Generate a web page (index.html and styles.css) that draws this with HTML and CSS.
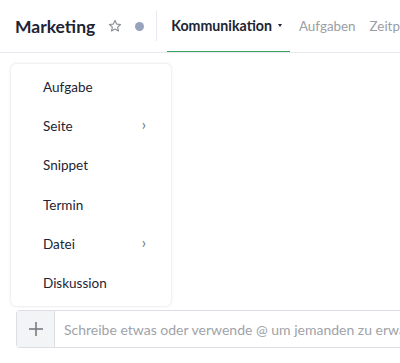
FILE: index.html
```html
<!DOCTYPE html>
<html lang="de">

<head>
  <meta charset="UTF-8">
  <meta name="viewport" content="width=device-width, initial-scale=1.0">
  <title>Marketing</title>
  <link rel="stylesheet" href="styles.css">
</head>

<body>
  <div class="page">
    <header class="topbar">
      <h1 class="title">Marketing</h1>
      <svg class="star" width="14" height="14" viewBox="0 0 24 24" fill="none" stroke="currentColor" stroke-width="2"
        stroke-linejoin="round">
        <polygon points="12,2.5 14.9,8.7 21.5,9.4 16.5,13.9 17.9,20.5 12,17.1 6.1,20.5 7.5,13.9 2.5,9.4 9.1,8.7" />
      </svg>
      <span class="status-dot"></span>
      <span class="divider"></span>
      <nav class="tabs">
        <a class="tab active">Kommunikation <span class="caret"></span></a>
        <a class="tab">Aufgaben</a>
        <a class="tab">Zeitplan</a>
      </nav>
    </header>

    <main class="content">
      <ul class="menu">
        <li class="menu-item">Aufgabe</li>
        <li class="menu-item">Seite <span class="chev">&#8250;</span></li>
        <li class="menu-item">Snippet</li>
        <li class="menu-item">Termin</li>
        <li class="menu-item">Datei <span class="chev">&#8250;</span></li>
        <li class="menu-item">Diskussion</li>
      </ul>
    </main>

    <div class="composer">
      <button class="add-btn">
        <svg width="14" height="14" viewBox="0 0 14 14" stroke="currentColor" stroke-width="1.6">
          <line x1="7" y1="0" x2="7" y2="14" />
          <line x1="0" y1="7" x2="14" y2="7" />
        </svg>
      </button>
      <input class="message" type="text" placeholder="Schreibe etwas oder verwende @ um jemanden zu erwähnen">
    </div>
  </div>
</body>

</html>
```

FILE: styles.css
```css
body {
  margin: 0;
  font-family: 'Lato', 'Noto Sans', sans-serif;
  color: #1d2433;
  background: #fff;
  overflow: hidden;
}

.page {
  height: 100vh;
  display: flex;
  flex-direction: column;
  position: relative;
}

.topbar {
  height: 52px;
  flex-shrink: 0;
  display: flex;
  align-items: center;
  padding-left: 15px;
  border-bottom: 1px solid #e8e9ee;
  white-space: nowrap;
  overflow: hidden;
}

.topbar > * {
  flex-shrink: 0;
}

.title {
  margin: 0;
  font-size: 17.5px;
  font-weight: 700;
  color: #1d2433;
}

.star {
  color: #8b8f97;
  margin-left: 13px;
}

.status-dot {
  width: 9px;
  height: 9px;
  border-radius: 50%;
  background: #97a3bd;
  margin-left: 13px;
}

.divider {
  width: 1px;
  height: 30px;
  background: #e8e9ee;
  margin-left: 12px;
}

.tabs {
  display: flex;
  align-self: stretch;
  margin-left: 10px;
}

.tab {
  display: flex;
  align-items: center;
  padding: 0 5px;
  margin-right: 4px;
  font-size: 13.4px;
  color: #9a9ea6;
  border-bottom: 2px solid transparent;
  margin-bottom: -1px;
}

.tab.active {
  font-size: 14.2px;
  font-weight: 700;
  color: #1d2433;
  border-bottom-color: #3aa35f;
  padding: 0 8px 0 4px;
}

.caret {
  display: inline-block;
  margin-left: 6px;
  border-left: 2.5px solid transparent;
  border-right: 2.5px solid transparent;
  border-top: 3px solid #1d2433;
}

.content {
  flex: 1;
}

.menu {
  position: absolute;
  left: 11px;
  top: 64px;
  width: 160px;
  height: 242px;
  box-sizing: border-box;
  margin: 0;
  padding: 3px 0 0;
  list-style: none;
  background: #fff;
  border-radius: 5px;
  box-shadow: 0 0 3px rgba(0, 0, 0, 0.16);
  z-index: 2;
}

.menu-item {
  height: 39.3px;
  display: flex;
  align-items: center;
  justify-content: space-between;
  padding: 0 25px 0 32px;
  font-size: 13.5px;
  color: #1d2433;
}

.chev {
  color: #6b6f76;
  font-size: 15px;
  margin-top: -4px;
}

.composer {
  display: flex;
  height: 38px;
  margin: 0 0 15px 16px;
  border: 1px solid #dcdee3;
  border-right: none;
  border-radius: 4px 0 0 4px;
  box-sizing: border-box;
}

.add-btn {
  width: 38px;
  flex-shrink: 0;
  border: none;
  border-right: 1px solid #dcdee3;
  background: #f3f4f6;
  color: #777b82;
  display: flex;
  align-items: center;
  justify-content: center;
  padding: 0;
}

.message {
  flex: 1;
  border: none;
  outline: none;
  padding: 0 0 0 9px;
  font-family: inherit;
  font-size: 14px;
  min-width: 0;
}

.message::placeholder {
  color: #a0a3a9;
}
```
